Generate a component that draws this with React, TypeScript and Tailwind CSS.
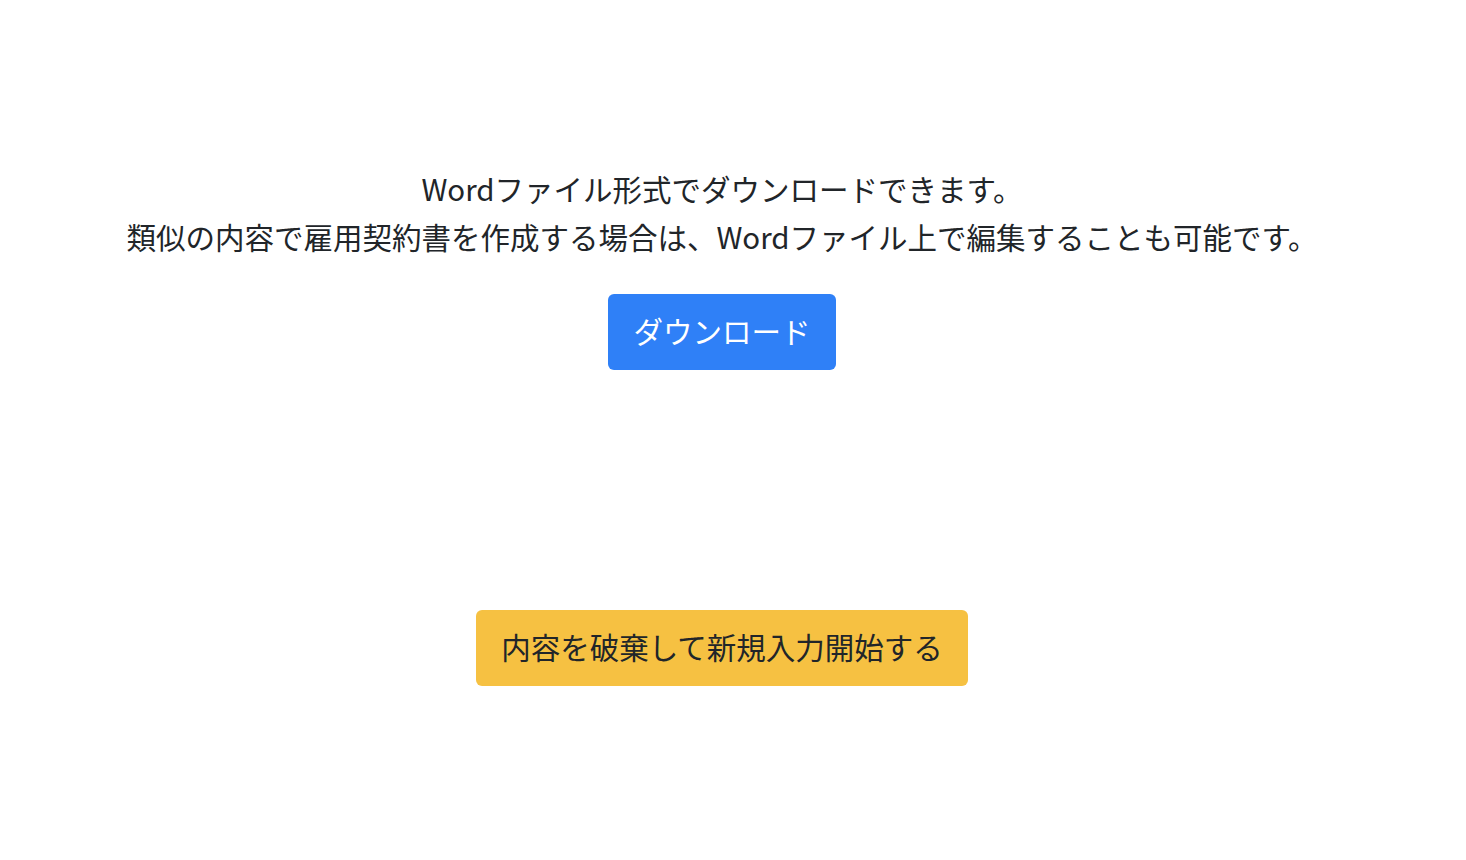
export default function App() {
  return (
    <div
      className="min-h-screen bg-white pr-[22px] text-[#212529]"
      style={{ fontFamily: '"Noto Sans CJK JP", "Noto Sans", sans-serif' }}
    >
      <div className="flex flex-col items-center pt-[164px]">
        {/* Download message */}
        <p className="text-center text-[29.5px] leading-[48px]">
          Wordファイル形式でダウンロードできます。
          <br />
          類似の内容で雇用契約書を作成する場合は、Wordファイル上で編集することも可能です。
        </p>

        <button
          type="button"
          className="mt-[34px] rounded-md bg-[#2f80f7] px-[25px] pt-[14px] pb-[18px] text-[29.5px] leading-[44px] text-white"
        >
          ダウンロード
        </button>

        {/* Reset */}
        <button
          type="button"
          className="mt-[240px] rounded-md bg-[#f6c142] px-[25px] pt-[14px] pb-[18px] text-[29.5px] leading-[44px] text-[#212529]"
        >
          内容を破棄して新規入力開始する
        </button>
      </div>
    </div>
  )
}
